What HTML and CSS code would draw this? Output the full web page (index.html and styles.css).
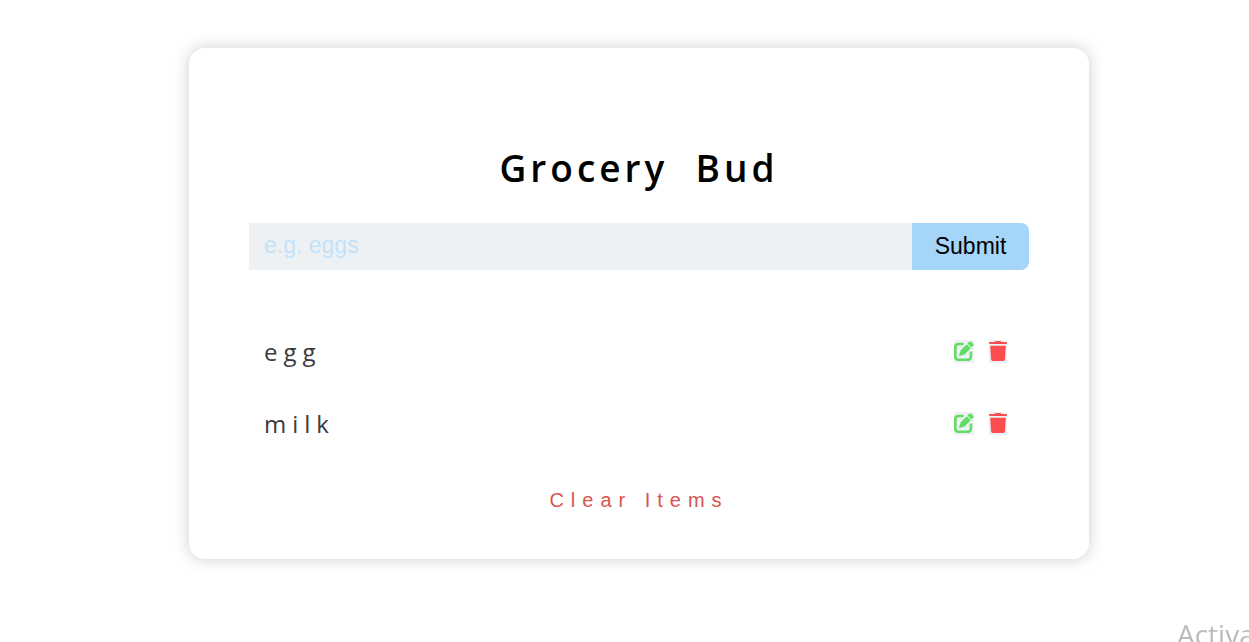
FILE: index.html
```html
<!DOCTYPE html>
<html lang="en">
<head>
<meta charset="utf-8">
<meta name="viewport" content="width=device-width, initial-scale=1">
<title>Grocery Bud</title>
<link rel="stylesheet" href="styles.css">
</head>
<body>
<svg class="sprite" aria-hidden="true">
  <symbol id="edit" viewBox="0 0 20 20"><path d="M8.500 3H4.200A2.900 2.900 0 0 0 1.300 5.900V15.800A2.900 2.900 0 0 0 4.200 18.700H14A2.900 2.900 0 0 0 16.900 15.800V11.500" fill="none" stroke="currentColor" stroke-width="2.600" stroke-linecap="round"/><path d="M5 15L6.500 9.400L12.700 3.200L16.800 7.300L10.600 13.500zM13.400 2.500L14.900 1Q16.200-.2 17.500 1L19 2.500Q20.200 3.800 19 5.100L17.500 6.600z"/></symbol>
  <symbol id="trash" viewBox="0 0 18 20"><path d="M5.500 1L6.200.3Q6.500 0 7 0H11Q11.500 0 11.800.3L12.500 1H17.300Q18 1 18 1.700V2.300Q18 3 17.300 3H.7Q0 3 0 2.300V1.700Q0 1 .7 1zM1.200 4.700H16.800L16 18.200Q15.900 20 14.200 20H3.800Q2.100 20 2 18.200z"/></symbol>
</svg>
<main class="card">
  <form class="grocery-form" onsubmit="return false">
    <h1 class="title">Grocery&nbsp; Bud</h1>
    <div class="control">
      <input class="field" type="text" placeholder="e.g. eggs" aria-label="Grocery item">
      <button class="submit" type="submit">Submit</button>
    </div>
  </form>
  <ul class="list">
    <li class="item">
      <span class="name">egg</span>
      <span class="actions">
        <button class="icon edit" type="button" aria-label="Edit egg"><svg width="20" height="20"><use href="#edit"/></svg></button>
        <button class="icon trash" type="button" aria-label="Delete egg"><svg width="18" height="20"><use href="#trash"/></svg></button>
      </span>
    </li>
    <li class="item">
      <span class="name">milk</span>
      <span class="actions">
        <button class="icon edit" type="button" aria-label="Edit milk"><svg width="20" height="20"><use href="#edit"/></svg></button>
        <button class="icon trash" type="button" aria-label="Delete milk"><svg width="18" height="20"><use href="#trash"/></svg></button>
      </span>
    </li>
  </ul>
  <button class="clear" type="button">Clear Items</button>
</main>
<div class="watermark">Activate</div>
</body>
</html>
```
FILE: styles.css
```css
* { box-sizing: border-box; }
body {
  margin: 0;
  background: #fff;
  color: #3a3a3a;
  font-family: "Open Sans", sans-serif;
}
.sprite { display: none; }
.card {
  margin: 48px 160px 40px 189px;
  padding: 91px 60px 43px;
  border-radius: 16px;
  box-shadow: 0 0 16px rgba(0, 0, 0, 0.2);
}
.title {
  margin: 0 0 26px;
  color: #000;
  font-size: 37px;
  line-height: 58px;
  font-weight: 600;
  letter-spacing: 4px;
  text-align: center;
}
.control { display: flex; }
.field, .submit {
  height: 47px;
  border: 0;
  font-family: "Liberation Sans", Arial, sans-serif;
  font-size: 23px;
}
.field {
  flex: 1;
  min-width: 0;
  padding: 0 15px 2px;
  background: #edf1f4;
  color: #333;
}
.field::placeholder { color: #c2e2f9; opacity: 1; }
.submit {
  width: 117px;
  padding: 0;
  border-radius: 0 8px 8px 0;
  background: #a5d5f9;
  color: #000;
}
.list {
  margin: 60px 0 0;
  padding: 0;
  list-style: none;
}
.item {
  display: flex;
  align-items: center;
  justify-content: space-between;
  height: 44px;
  margin-bottom: 28px;
  padding: 0 22px 0 15px;
}
.name {
  font-size: 24px;
  line-height: 44px;
  letter-spacing: 6px;
}
.actions {
  display: flex;
  gap: 15px;
  padding-bottom: 1px;
}
.icon {
  display: flex;
  align-items: flex-start;
  height: 23px;
  padding: 1px 0 0;
  border: 0;
  background: #edf1f4;
}
.icon svg { fill: currentColor; }
.edit { color: #5fdd62; }
.trash { color: #ff4d4f; }
.clear {
  display: block;
  margin: 38px auto 0;
  padding: 0;
  border: 0;
  background: none;
  color: #d9534f;
  font: 20px/32px "Liberation Sans", Arial, sans-serif;
  letter-spacing: 7px;
}
.watermark {
  position: fixed;
  left: calc(100% - 72px);
  top: calc(100% - 26px);
  color: #bbb;
  font-size: 28px;
  line-height: 36px;
}
```
